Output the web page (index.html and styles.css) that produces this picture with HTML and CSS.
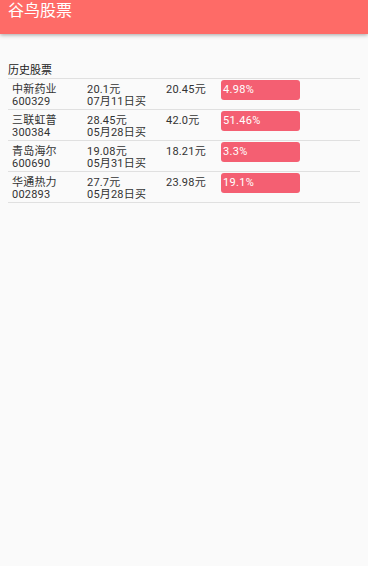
FILE: index.html
```html
<!DOCTYPE html>
<html lang="zh">
<head>
<meta charset="utf-8">
<title>谷鸟股票</title>
<link rel="stylesheet" href="styles.css">
</head>
<body>
<header class="appbar"><span class="title">谷鸟股票</span></header>
<main class="content">
  <div class="section-label">历史股票</div>
  <div class="list">
    <div class="row">
      <div class="col name"><div>中新药业</div><div>600329</div></div>
      <div class="col buy"><div>20.1元</div><div>07月11日买</div></div>
      <div class="col now"><div>20.45元</div></div>
      <div class="badge">4.98%</div>
    </div>
    <div class="row">
      <div class="col name"><div>三联虹普</div><div>300384</div></div>
      <div class="col buy"><div>28.45元</div><div>05月28日买</div></div>
      <div class="col now"><div>42.0元</div></div>
      <div class="badge">51.46%</div>
    </div>
    <div class="row">
      <div class="col name"><div>青岛海尔</div><div>600690</div></div>
      <div class="col buy"><div>19.08元</div><div>05月31日买</div></div>
      <div class="col now"><div>18.21元</div></div>
      <div class="badge">3.3%</div>
    </div>
    <div class="row">
      <div class="col name"><div>华通热力</div><div>002893</div></div>
      <div class="col buy"><div>27.7元</div><div>05月28日买</div></div>
      <div class="col now"><div>23.98元</div></div>
      <div class="badge">19.1%</div>
    </div>
  </div>
</main>
</body>
</html>
```
FILE: styles.css
```css
html, body {
  margin: 0;
  padding: 0;
  background: #fafafa;
}
body {
  font-family: Roboto, "Noto Sans CJK SC", sans-serif;
  color: #333;
  font-size: 11px;
}
.appbar {
  height: 34px;
  background: #fe6b67;
  box-shadow: 0 1px 4px rgba(0,0,0,0.35);
  box-sizing: border-box;
  padding: 0 8px;
  position: relative;
}
.title {
  display: block;
  color: #fff;
  font-size: 16px;
  line-height: 22px;
}
.content {
  padding: 0 8px;
}
.section-label {
  margin-top: 31px;
  line-height: 12px;
  padding-bottom: 1px;
  color: #222;
}
.list {
  border-top: 1px solid #e0e0e0;
}
.row {
  display: grid;
  grid-template-columns: 75px 79px 55px 79px;
  padding-left: 4px;
  height: 30px;
  border-bottom: 1px solid #e0e0e0;
}
.col {
  padding-top: 5px;
  line-height: 12px;
  letter-spacing: 0.2px;
}
.badge {
  margin-top: 1px;
  height: 20px;
  line-height: 20px;
  background: #f45f72;
  color: #fff;
  border-radius: 3px;
  padding-left: 2px;
  letter-spacing: 0.3px;
  box-sizing: border-box;
}
```
